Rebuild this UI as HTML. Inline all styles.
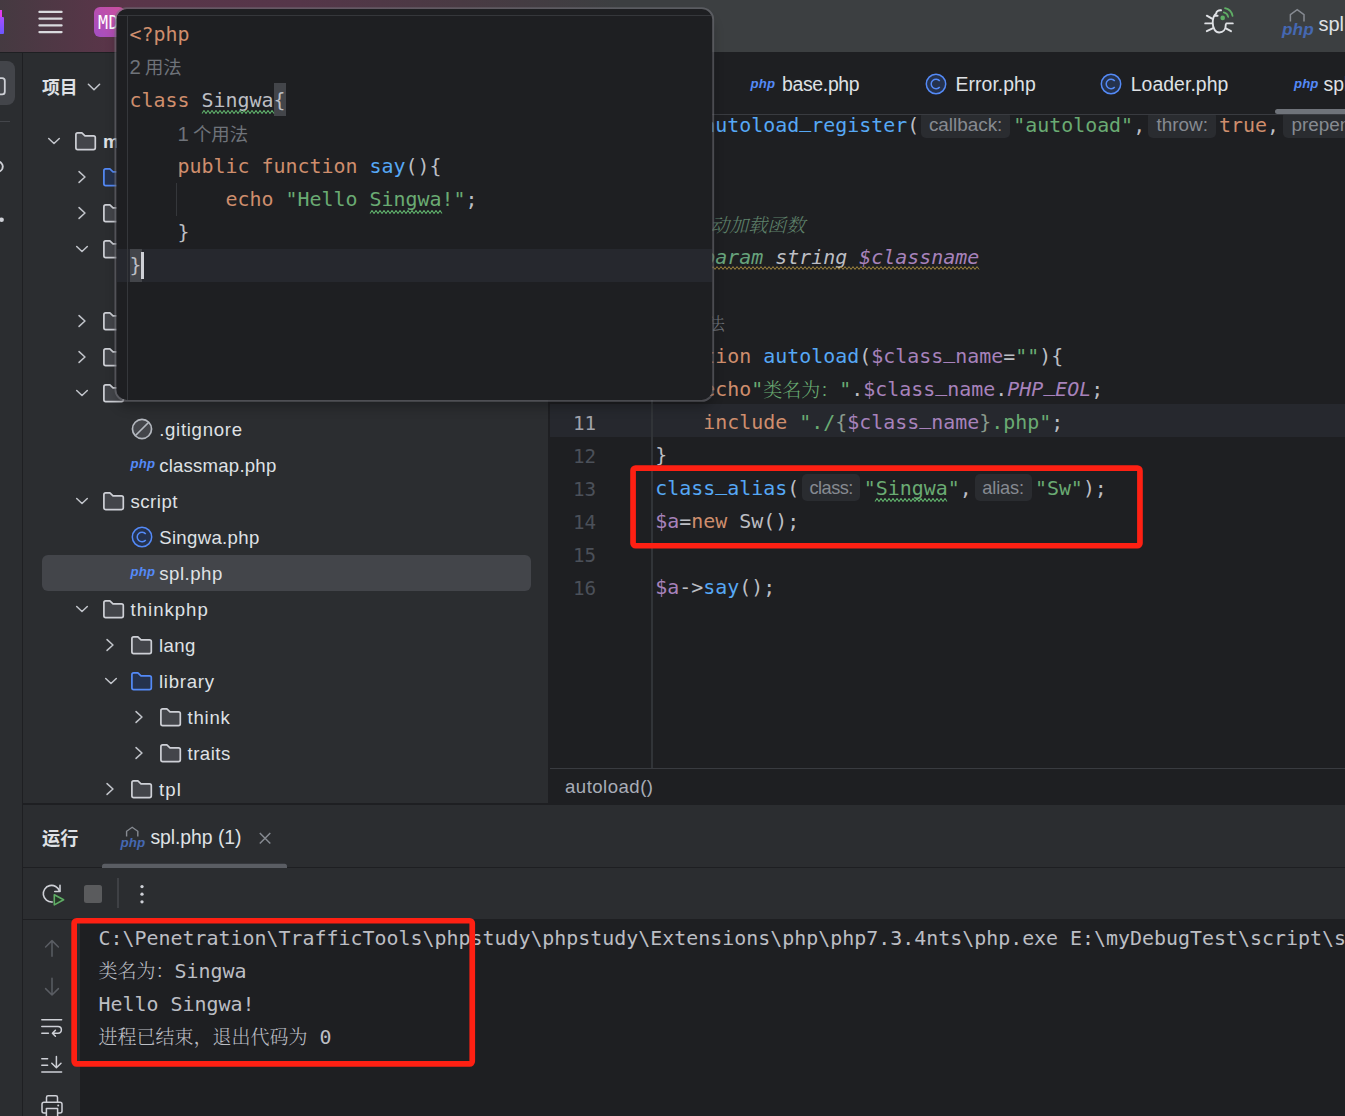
<!DOCTYPE html>
<html lang="zh"><head><meta charset="utf-8"><title>spl.php</title>
<style>
*{box-sizing:border-box;margin:0;padding:0}
html,body{width:1345px;height:1116px;overflow:hidden;background:#2b2d30}
body{position:relative;font-family:"Liberation Sans","Noto Sans CJK SC",sans-serif;color:#dfe1e5}
.a{position:absolute;display:block}
.t{white-space:pre;line-height:30px;height:30px}
.b{font-weight:bold}
.php{font-family:"Liberation Sans",sans-serif;font-style:italic;font-weight:bold;line-height:20px;height:20px;white-space:pre}
.code{font-family:"DejaVu Sans Mono","Liberation Mono","Noto Sans CJK SC",monospace;font-size:19.93px;line-height:33px;height:33px;white-space:pre;color:#bcbec4}
.cj{font-family:"Noto Serif CJK SC","Noto Sans CJK SC",serif;font-size:19px;line-height:0;font-weight:300;position:relative;top:0.8px}
.u{position:relative;top:-4.7px}.k{color:#cf8e6d}.s{color:#6aab73}.f{color:#56a8f5}.v{color:#a782bb}.i{font-style:italic}
.dc{color:#5f826b;font-style:italic}.dt{color:#67a37c;font-style:italic}
.h{display:inline-block;vertical-align:top;height:27px;margin-top:2.4px;border-radius:5px;background:#2a2c30;color:#868a91;font-family:"Liberation Sans",sans-serif;font-size:18.9px;line-height:28.2px;text-align:center;overflow:hidden}
.ln{font-family:"DejaVu Sans Mono","Liberation Mono",monospace;font-size:19.2px;line-height:33px;height:33px;color:#4b5059;text-align:right;width:60px}
.cv{font-size:18.4px;color:#6f737a;line-height:33px;height:33px;white-space:pre}
</style></head><body>

<div class="a" style="left:0;top:0;width:1345px;height:52px;background:linear-gradient(90deg,#453a41 0,#5a3549 110px,#553649 300px,#493a43 460px,#3c3f41 620px)"></div>
<div class="a" style="left:0;top:10px;width:2px;height:8px;background:#e13cf0"></div>
<div class="a" style="left:0;top:17px;width:4px;height:17px;background:linear-gradient(180deg,#a84dff,#6b57ff);border-radius:0 1px 1px 0"></div>
<svg class="a" style="left:36px;top:8px" width="30" height="28" viewBox="36 8 30 28"><path d="M39.4 11.9H61.6M39.4 18.6H61.6M39.4 25.4H61.6M39.4 32.1H61.6" stroke="#d9dade" stroke-width="2.2" stroke-linecap="round" fill="none"/></svg>
<div class="a" style="left:94px;top:7px;width:31px;height:30px;border-radius:6px;background:linear-gradient(45deg,#a24fc4,#cf4f9c)"></div>
<span class="a" style="left:97.5px;top:11px;font-family:'DejaVu Sans Mono',monospace;font-size:18.6px;line-height:24px;color:#fff;white-space:pre;letter-spacing:0.6px;transform:scaleX(.9);transform-origin:0 0">MD</span>
<svg class="a" style="left:1203px;top:4px" width="34" height="34" viewBox="1203 4 34 34">
<g fill="none" stroke="#dfe1e5" stroke-width="1.9" stroke-linecap="round">
<path d="M1225.8 24.5C1225.8 29.5 1223 32.5 1219.25 32.5C1215.5 32.5 1212.7 28.5 1212.7 22.5C1212.7 18.3 1214.2 15 1216.2 13.4C1216.4 11.3 1218.2 10 1221 10.3"/>
<path d="M1214.8 15.7H1217.6"/>
<path d="M1212 18.6L1206.8 15.7M1212 23.4H1205.2M1212.6 28.3L1206.8 31.2"/>
<path d="M1226.4 23.4H1232.8M1225.8 28.3L1231 31.2"/>
</g>
<circle cx="1222.7" cy="17.9" r="2.3" fill="#5fad65"/>
<g fill="none" stroke="#5fad65" stroke-width="1.7" stroke-linecap="round">
<path d="M1223.8 12.4A5.6 5.6 0 0 1 1228.2 16.8"/>
<path d="M1225 8.2A9.8 9.8 0 0 1 1232.6 16"/>
</g></svg>
<svg class="a" style="left:1286px;top:6px" width="24" height="18" viewBox="1286 6 24 18"><path d="M1290.4 21.5V14.6L1297.2 9.6L1304 14.6V21.5" fill="none" stroke="#868a91" stroke-width="1.5"/></svg>
<span class="a php" style="left:1282px;top:19.3px;font-size:17.2px;color:#4568b2;letter-spacing:0.1px">php</span>
<span id="tb_spl" class="a t " style="left:1318.5px;top:9.2px;font-size:20px;color:#dfe1e5;">spl.php</span>
<div class="a" style="left:0;top:52px;width:22px;height:1064px;background:#2b2d30"></div>
<div class="a" style="left:22px;top:52px;width:1px;height:1064px;background:#1e1f22"></div>
<div class="a" style="left:-10px;top:61px;width:24.5px;height:44px;border-radius:8px;background:#43454a"></div>
<svg class="a" style="left:0;top:70px" width="12" height="160" viewBox="0 70 12 160">
<rect x="-10" y="78.1" width="14.8" height="16.2" rx="2.6" fill="none" stroke="#ced0d6" stroke-width="1.8"/>
<circle cx="-2.2" cy="166.6" r="5" fill="none" stroke="#ced0d6" stroke-width="1.9"/>
<circle cx="1.6" cy="219.7" r="2.3" fill="#ced0d6"/></svg>
<div class="a" style="left:0;top:121px;width:10px;height:1px;background:#43454a"></div>
<div class="a" style="left:23px;top:52px;width:525px;height:751px;background:#2b2d30"></div>
<span id="proj" class="a t b" style="left:42px;top:73px;font-size:17.8px;color:#dfe1e5;letter-spacing:-0.04px">项目</span>
<svg class="a" style="left:86px;top:78.7px" width="16" height="16" viewBox="-8 -8 16 16"><path d="M-5.6 -2.7L0 2.7L5.6 -2.7" fill="none" stroke="#c3c6cc" stroke-width="1.55" stroke-linecap="round" stroke-linejoin="round"/></svg>
<div class="a" style="left:41.5px;top:554.5px;width:489px;height:36px;border-radius:6px;background:#43454a"></div>
<svg class="a" style="left:45.5px;top:132.8px" width="16" height="16" viewBox="-8 -8 16 16"><path d="M-5.3 -2.55L0 2.55L5.3 -2.55" fill="none" stroke="#c0c3c9" stroke-width="1.55" stroke-linecap="round" stroke-linejoin="round"/></svg>
<svg class="a" style="left:74.7px;top:131.7px" width="22" height="19" viewBox="0 0 22 19"><path d="M2.7 .9H6.9L10 3.8H18.5Q20.3 3.8 20.3 5.6V15.8Q20.3 17.6 18.5 17.6H2.7Q.9 17.6 .9 15.8V2.7Q.9 .9 2.7 .9Z" fill="#43454a" stroke="#ced0d6" stroke-width="1.7" stroke-linejoin="round"/></svg>
<span id="tr0" class="a t b" style="left:103.0px;top:126.9px;font-size:18.6px;color:#dfe1e5;">myDebugTest</span>
<svg class="a" style="left:73.95px;top:169.1px" width="16" height="16" viewBox="-8 -8 16 16"><path d="M-2.95 -5.4L2.95 0L-2.95 5.4" fill="none" stroke="#c0c3c9" stroke-width="1.55" stroke-linecap="round" stroke-linejoin="round"/></svg>
<svg class="a" style="left:103.1px;top:167.7px" width="22" height="19" viewBox="0 0 22 19"><path d="M2.7 .9H6.9L10 3.8H18.5Q20.3 3.8 20.3 5.6V15.8Q20.3 17.6 18.5 17.6H2.7Q.9 17.6 .9 15.8V2.7Q.9 .9 2.7 .9Z" fill="#25324d" stroke="#548af7" stroke-width="1.7" stroke-linejoin="round"/></svg>
<svg class="a" style="left:73.95px;top:205.1px" width="16" height="16" viewBox="-8 -8 16 16"><path d="M-2.95 -5.4L2.95 0L-2.95 5.4" fill="none" stroke="#c0c3c9" stroke-width="1.55" stroke-linecap="round" stroke-linejoin="round"/></svg>
<svg class="a" style="left:103.1px;top:203.7px" width="22" height="19" viewBox="0 0 22 19"><path d="M2.7 .9H6.9L10 3.8H18.5Q20.3 3.8 20.3 5.6V15.8Q20.3 17.6 18.5 17.6H2.7Q.9 17.6 .9 15.8V2.7Q.9 .9 2.7 .9Z" fill="#43454a" stroke="#ced0d6" stroke-width="1.7" stroke-linejoin="round"/></svg>
<svg class="a" style="left:74.0px;top:240.8px" width="16" height="16" viewBox="-8 -8 16 16"><path d="M-5.3 -2.55L0 2.55L5.3 -2.55" fill="none" stroke="#c0c3c9" stroke-width="1.55" stroke-linecap="round" stroke-linejoin="round"/></svg>
<svg class="a" style="left:103.1px;top:239.7px" width="22" height="19" viewBox="0 0 22 19"><path d="M2.7 .9H6.9L10 3.8H18.5Q20.3 3.8 20.3 5.6V15.8Q20.3 17.6 18.5 17.6H2.7Q.9 17.6 .9 15.8V2.7Q.9 .9 2.7 .9Z" fill="#43454a" stroke="#ced0d6" stroke-width="1.7" stroke-linejoin="round"/></svg>
<svg class="a" style="left:73.95px;top:313.1px" width="16" height="16" viewBox="-8 -8 16 16"><path d="M-2.95 -5.4L2.95 0L-2.95 5.4" fill="none" stroke="#c0c3c9" stroke-width="1.55" stroke-linecap="round" stroke-linejoin="round"/></svg>
<svg class="a" style="left:103.1px;top:311.7px" width="22" height="19" viewBox="0 0 22 19"><path d="M2.7 .9H6.9L10 3.8H18.5Q20.3 3.8 20.3 5.6V15.8Q20.3 17.6 18.5 17.6H2.7Q.9 17.6 .9 15.8V2.7Q.9 .9 2.7 .9Z" fill="#43454a" stroke="#ced0d6" stroke-width="1.7" stroke-linejoin="round"/></svg>
<svg class="a" style="left:73.95px;top:349.1px" width="16" height="16" viewBox="-8 -8 16 16"><path d="M-2.95 -5.4L2.95 0L-2.95 5.4" fill="none" stroke="#c0c3c9" stroke-width="1.55" stroke-linecap="round" stroke-linejoin="round"/></svg>
<svg class="a" style="left:103.1px;top:347.7px" width="22" height="19" viewBox="0 0 22 19"><path d="M2.7 .9H6.9L10 3.8H18.5Q20.3 3.8 20.3 5.6V15.8Q20.3 17.6 18.5 17.6H2.7Q.9 17.6 .9 15.8V2.7Q.9 .9 2.7 .9Z" fill="#43454a" stroke="#ced0d6" stroke-width="1.7" stroke-linejoin="round"/></svg>
<svg class="a" style="left:74.0px;top:384.8px" width="16" height="16" viewBox="-8 -8 16 16"><path d="M-5.3 -2.55L0 2.55L5.3 -2.55" fill="none" stroke="#c0c3c9" stroke-width="1.55" stroke-linecap="round" stroke-linejoin="round"/></svg>
<svg class="a" style="left:103.1px;top:383.7px" width="22" height="19" viewBox="0 0 22 19"><path d="M2.7 .9H6.9L10 3.8H18.5Q20.3 3.8 20.3 5.6V15.8Q20.3 17.6 18.5 17.6H2.7Q.9 17.6 .9 15.8V2.7Q.9 .9 2.7 .9Z" fill="#43454a" stroke="#ced0d6" stroke-width="1.7" stroke-linejoin="round"/></svg>
<svg class="a" style="left:130.9px;top:418.3px" width="22" height="22" viewBox="-11 -11 22 22"><circle r="9.55" fill="#43454a" stroke="#b4b8bf" stroke-width="1.7"/><path d="M-6.75286976033153 6.75286976033153L6.75286976033153 -6.75286976033153" stroke="#b4b8bf" stroke-width="1.7"/></svg>
<span id="tr8" class="a t " style="left:159.2px;top:414.9px;font-size:18.6px;color:#dfe1e5;letter-spacing:0.70px">.gitignore</span>
<span class="a php" style="left:130.6px;top:454.4px;font-size:13.2px;color:#548af7;letter-spacing:0.1px">php</span>
<span id="tr9" class="a t " style="left:159.2px;top:450.9px;font-size:18.6px;color:#dfe1e5;letter-spacing:0.21px">classmap.php</span>
<svg class="a" style="left:74.0px;top:492.8px" width="16" height="16" viewBox="-8 -8 16 16"><path d="M-5.3 -2.55L0 2.55L5.3 -2.55" fill="none" stroke="#c0c3c9" stroke-width="1.55" stroke-linecap="round" stroke-linejoin="round"/></svg>
<svg class="a" style="left:103.1px;top:491.7px" width="22" height="19" viewBox="0 0 22 19"><path d="M2.7 .9H6.9L10 3.8H18.5Q20.3 3.8 20.3 5.6V15.8Q20.3 17.6 18.5 17.6H2.7Q.9 17.6 .9 15.8V2.7Q.9 .9 2.7 .9Z" fill="#43454a" stroke="#ced0d6" stroke-width="1.7" stroke-linejoin="round"/></svg>
<span id="tr10" class="a t " style="left:130.5px;top:486.9px;font-size:18.6px;color:#dfe1e5;letter-spacing:0.51px">script</span>
<svg class="a" style="left:130.9px;top:526.2px" width="22" height="22" viewBox="-11 -11 22 22"><circle r="9.7" fill="#25324d" stroke="#548af7" stroke-width="1.5"/><path d="M3.75 -3A4.8 4.8 0 1 0 3.75 3" fill="none" stroke="#548af7" stroke-width="1.5"/></svg>
<span id="tr11" class="a t " style="left:159.2px;top:522.9px;font-size:18.6px;color:#dfe1e5;letter-spacing:0.32px">Singwa.php</span>
<span class="a php" style="left:130.6px;top:562.4px;font-size:13.2px;color:#548af7;letter-spacing:0.1px">php</span>
<span id="tr12" class="a t " style="left:159.2px;top:558.9px;font-size:18.6px;color:#dfe1e5;letter-spacing:0.53px">spl.php</span>
<svg class="a" style="left:74.0px;top:600.8px" width="16" height="16" viewBox="-8 -8 16 16"><path d="M-5.3 -2.55L0 2.55L5.3 -2.55" fill="none" stroke="#c0c3c9" stroke-width="1.55" stroke-linecap="round" stroke-linejoin="round"/></svg>
<svg class="a" style="left:103.1px;top:599.7px" width="22" height="19" viewBox="0 0 22 19"><path d="M2.7 .9H6.9L10 3.8H18.5Q20.3 3.8 20.3 5.6V15.8Q20.3 17.6 18.5 17.6H2.7Q.9 17.6 .9 15.8V2.7Q.9 .9 2.7 .9Z" fill="#43454a" stroke="#ced0d6" stroke-width="1.7" stroke-linejoin="round"/></svg>
<span id="tr13" class="a t " style="left:130.5px;top:594.9px;font-size:18.6px;color:#dfe1e5;letter-spacing:1.00px">thinkphp</span>
<svg class="a" style="left:102.45px;top:637.1px" width="16" height="16" viewBox="-8 -8 16 16"><path d="M-2.95 -5.4L2.95 0L-2.95 5.4" fill="none" stroke="#c0c3c9" stroke-width="1.55" stroke-linecap="round" stroke-linejoin="round"/></svg>
<svg class="a" style="left:131.4px;top:635.7px" width="22" height="19" viewBox="0 0 22 19"><path d="M2.7 .9H6.9L10 3.8H18.5Q20.3 3.8 20.3 5.6V15.8Q20.3 17.6 18.5 17.6H2.7Q.9 17.6 .9 15.8V2.7Q.9 .9 2.7 .9Z" fill="#43454a" stroke="#ced0d6" stroke-width="1.7" stroke-linejoin="round"/></svg>
<span id="tr14" class="a t " style="left:159.0px;top:630.9px;font-size:18.6px;color:#dfe1e5;letter-spacing:0.36px">lang</span>
<svg class="a" style="left:102.5px;top:672.8px" width="16" height="16" viewBox="-8 -8 16 16"><path d="M-5.3 -2.55L0 2.55L5.3 -2.55" fill="none" stroke="#c0c3c9" stroke-width="1.55" stroke-linecap="round" stroke-linejoin="round"/></svg>
<svg class="a" style="left:131.4px;top:671.7px" width="22" height="19" viewBox="0 0 22 19"><path d="M2.7 .9H6.9L10 3.8H18.5Q20.3 3.8 20.3 5.6V15.8Q20.3 17.6 18.5 17.6H2.7Q.9 17.6 .9 15.8V2.7Q.9 .9 2.7 .9Z" fill="#25324d" stroke="#548af7" stroke-width="1.7" stroke-linejoin="round"/></svg>
<span id="tr15" class="a t " style="left:159.0px;top:666.9px;font-size:18.6px;color:#dfe1e5;letter-spacing:0.74px">library</span>
<svg class="a" style="left:130.95px;top:709.1px" width="16" height="16" viewBox="-8 -8 16 16"><path d="M-2.95 -5.4L2.95 0L-2.95 5.4" fill="none" stroke="#c0c3c9" stroke-width="1.55" stroke-linecap="round" stroke-linejoin="round"/></svg>
<svg class="a" style="left:159.8px;top:707.7px" width="22" height="19" viewBox="0 0 22 19"><path d="M2.7 .9H6.9L10 3.8H18.5Q20.3 3.8 20.3 5.6V15.8Q20.3 17.6 18.5 17.6H2.7Q.9 17.6 .9 15.8V2.7Q.9 .9 2.7 .9Z" fill="#43454a" stroke="#ced0d6" stroke-width="1.7" stroke-linejoin="round"/></svg>
<span id="tr16" class="a t " style="left:187.5px;top:702.9px;font-size:18.6px;color:#dfe1e5;letter-spacing:0.78px">think</span>
<svg class="a" style="left:130.95px;top:745.1px" width="16" height="16" viewBox="-8 -8 16 16"><path d="M-2.95 -5.4L2.95 0L-2.95 5.4" fill="none" stroke="#c0c3c9" stroke-width="1.55" stroke-linecap="round" stroke-linejoin="round"/></svg>
<svg class="a" style="left:159.8px;top:743.7px" width="22" height="19" viewBox="0 0 22 19"><path d="M2.7 .9H6.9L10 3.8H18.5Q20.3 3.8 20.3 5.6V15.8Q20.3 17.6 18.5 17.6H2.7Q.9 17.6 .9 15.8V2.7Q.9 .9 2.7 .9Z" fill="#43454a" stroke="#ced0d6" stroke-width="1.7" stroke-linejoin="round"/></svg>
<span id="tr17" class="a t " style="left:187.5px;top:738.9px;font-size:18.6px;color:#dfe1e5;letter-spacing:0.48px">traits</span>
<svg class="a" style="left:102.45px;top:781.1px" width="16" height="16" viewBox="-8 -8 16 16"><path d="M-2.95 -5.4L2.95 0L-2.95 5.4" fill="none" stroke="#c0c3c9" stroke-width="1.55" stroke-linecap="round" stroke-linejoin="round"/></svg>
<svg class="a" style="left:131.4px;top:779.7px" width="22" height="19" viewBox="0 0 22 19"><path d="M2.7 .9H6.9L10 3.8H18.5Q20.3 3.8 20.3 5.6V15.8Q20.3 17.6 18.5 17.6H2.7Q.9 17.6 .9 15.8V2.7Q.9 .9 2.7 .9Z" fill="#43454a" stroke="#ced0d6" stroke-width="1.7" stroke-linejoin="round"/></svg>
<span id="tr18" class="a t " style="left:159.0px;top:774.9px;font-size:18.6px;color:#dfe1e5;letter-spacing:1.12px">tpl</span>
<div class="a" style="left:0;top:52px;width:549px;height:1px;background:#1e1f22"></div>
<div class="a" style="left:548px;top:52px;width:797px;height:752px;background:#1e1f22"></div>
<div class="a" style="left:549px;top:404px;width:796px;height:33px;background:#26282e"></div>
<div class="a code" style="left:655.3px;top:108.80000000000001px"><span class="f">spl<span class="u">_</span>autoload<span class="u">_</span>register</span>(<span class="h" style="width:88.5px;margin-left:2.2px;margin-right:3.3px;font-size:18.9px;letter-spacing:0px">callback:</span><span class="s">"autoload"</span>,<span class="h" style="width:67.5px;margin-left:3.3px;margin-right:3.2px;font-size:18.9px;letter-spacing:0px">throw:</span><span class="k">true</span>,<span class="h" style="width:91px;margin-left:4.2px;margin-right:3.3px;font-size:18.9px;letter-spacing:0px">prepend:</span></div>
<div class="a code" style="left:655.3px;top:174.8px"><span class="dc">/**</span></div>
<div class="a code" style="left:655.3px;top:207.8px"><span class="dc"> * <span class="cj">自动加载函数</span></span></div>
<div class="a code" style="left:655.3px;top:240.8px"><span class="dc"> * </span><span class="dt">@param</span><span class="i"> string </span><span class="v i">$classname</span></div>
<div class="a code" style="left:655.3px;top:273.8px"><span class="dc"> */</span></div>
<div class="a code" style="left:655.3px;top:339.8px"><span class="k">function</span> <span class="f">autoload</span>(<span class="v">$class<span class="u">_</span>name</span>=<span class="s">""</span>){</div>
<div class="a code" style="left:655.3px;top:372.8px">    <span class="k">echo</span><span class="s">"<span class="cj">类名为：</span>"</span>.<span class="v">$class<span class="u">_</span>name</span>.<span class="v i">PHP<span class="u">_</span>EOL</span>;</div>
<div class="a code" style="left:655.3px;top:405.8px">    <span class="k">include</span> <span class="s">"./</span><span style="color:#8a9a8c">{</span><span class="v">$class<span class="u">_</span>name</span><span style="color:#8a9a8c">}</span><span class="s">.php"</span>;</div>
<div class="a code" style="left:655.3px;top:438.8px">}</div>
<div class="a code" style="left:655.3px;top:471.8px"><span class="f">class<span class="u">_</span>alias</span>(<span class="h" style="width:58px;margin-left:2.9px;margin-right:3.6px;font-size:18.2px;letter-spacing:-0.5px">class:</span><span class="s">"Singwa"</span>,<span class="h" style="width:57px;margin-left:2.9px;margin-right:3.3px;font-size:18.2px;letter-spacing:-0.12px">alias:</span><span class="s">"Sw"</span>);</div>
<div class="a code" style="left:655.3px;top:504.8px"><span class="v">$a</span>=<span class="k">new</span> Sw();</div>
<div class="a code" style="left:655.3px;top:570.8px"><span class="v">$a</span>-&gt;<span class="f">say</span>();</div>
<span id="cv_e" class="a cv" style="left:655.3px;top:305.6px">1 <span style="font-family:'Noto Serif CJK SC',serif;font-size:17.4px;font-weight:300;letter-spacing:1px">个用法</span></span>
<svg class="a" style="left:702px;top:266.3px" width="279.0" height="4" viewBox="0 0 279.0 4"><path d="M1.0 3.4L3.0 0.6L5.0 3.4L7.0 0.6L9.0 3.4L11.0 0.6L13.0 3.4L15.0 0.6L17.0 3.4L19.0 0.6L21.0 3.4L23.0 0.6L25.0 3.4L27.0 0.6L29.0 3.4L31.0 0.6L33.0 3.4L35.0 0.6L37.0 3.4L39.0 0.6L41.0 3.4L43.0 0.6L45.0 3.4L47.0 0.6L49.0 3.4L51.0 0.6L53.0 3.4L55.0 0.6L57.0 3.4L59.0 0.6L61.0 3.4L63.0 0.6L65.0 3.4L67.0 0.6L69.0 3.4L71.0 0.6L73.0 3.4L75.0 0.6L77.0 3.4L79.0 0.6L81.0 3.4L83.0 0.6L85.0 3.4L87.0 0.6L89.0 3.4L91.0 0.6L93.0 3.4L95.0 0.6L97.0 3.4L99.0 0.6L101.0 3.4L103.0 0.6L105.0 3.4L107.0 0.6L109.0 3.4L111.0 0.6L113.0 3.4L115.0 0.6L117.0 3.4L119.0 0.6L121.0 3.4L123.0 0.6L125.0 3.4L127.0 0.6L129.0 3.4L131.0 0.6L133.0 3.4L135.0 0.6L137.0 3.4L139.0 0.6L141.0 3.4L143.0 0.6L145.0 3.4L147.0 0.6L149.0 3.4L151.0 0.6L153.0 3.4L155.0 0.6L157.0 3.4L159.0 0.6L161.0 3.4L163.0 0.6L165.0 3.4L167.0 0.6L169.0 3.4L171.0 0.6L173.0 3.4L175.0 0.6L177.0 3.4L179.0 0.6L181.0 3.4L183.0 0.6L185.0 3.4L187.0 0.6L189.0 3.4L191.0 0.6L193.0 3.4L195.0 0.6L197.0 3.4L199.0 0.6L201.0 3.4L203.0 0.6L205.0 3.4L207.0 0.6L209.0 3.4L211.0 0.6L213.0 3.4L215.0 0.6L217.0 3.4L219.0 0.6L221.0 3.4L223.0 0.6L225.0 3.4L227.0 0.6L229.0 3.4L231.0 0.6L233.0 3.4L235.0 0.6L237.0 3.4L239.0 0.6L241.0 3.4L243.0 0.6L245.0 3.4L247.0 0.6L249.0 3.4L251.0 0.6L253.0 3.4L255.0 0.6L257.0 3.4L259.0 0.6L261.0 3.4L263.0 0.6L265.0 3.4L267.0 0.6L269.0 3.4L271.0 0.6L273.0 3.4L275.0 0.6L277.0 3.4" fill="none" stroke="#a3873f" stroke-width="1.0"/></svg>
<svg class="a" style="left:874px;top:497.5px" width="74.0" height="4" viewBox="0 0 74.0 4"><path d="M1.0 3.5L3.0 0.5L5.0 3.5L7.0 0.5L9.0 3.5L11.0 0.5L13.0 3.5L15.0 0.5L17.0 3.5L19.0 0.5L21.0 3.5L23.0 0.5L25.0 3.5L27.0 0.5L29.0 3.5L31.0 0.5L33.0 3.5L35.0 0.5L37.0 3.5L39.0 0.5L41.0 3.5L43.0 0.5L45.0 3.5L47.0 0.5L49.0 3.5L51.0 0.5L53.0 3.5L55.0 0.5L57.0 3.5L59.0 0.5L61.0 3.5L63.0 0.5L65.0 3.5L67.0 0.5L69.0 3.5L71.0 0.5L73.0 3.5" fill="none" stroke="#5fb06b" stroke-width="1.05"/></svg>
<div class="a" style="left:651.4px;top:115px;width:1.7px;height:653px;background:#313438"></div>
<div class="a ln" style="left:536px;top:406.90000000000003px;color:#a1a3ab">11</div>
<div class="a ln" style="left:536px;top:439.90000000000003px;color:#4b5059">12</div>
<div class="a ln" style="left:536px;top:472.90000000000003px;color:#4b5059">13</div>
<div class="a ln" style="left:536px;top:505.90000000000003px;color:#4b5059">14</div>
<div class="a ln" style="left:536px;top:538.9px;color:#4b5059">15</div>
<div class="a ln" style="left:536px;top:571.9px;color:#4b5059">16</div>
<div class="a" style="left:548px;top:52px;width:797px;height:62px;background:#1e1f22"></div>
<div class="a" style="left:548px;top:114px;width:797px;height:1.4px;background:#393b40"></div>
<span class="a php" style="left:750.6px;top:73.6px;font-size:13.2px;color:#548af7;letter-spacing:0.1px">php</span>
<span id="tab1" class="a t " style="left:782px;top:69px;font-size:19.4px;color:#dfe1e5;letter-spacing:-0.31px">base.php</span>
<svg class="a" style="left:925px;top:73.3px" width="22" height="22" viewBox="-11 -11 22 22"><circle r="9.7" fill="#25324d" stroke="#548af7" stroke-width="1.5"/><path d="M3.75 -3A4.8 4.8 0 1 0 3.75 3" fill="none" stroke="#548af7" stroke-width="1.5"/></svg>
<span id="tab2" class="a t " style="left:955.6px;top:69px;font-size:19.4px;color:#dfe1e5;letter-spacing:0.04px">Error.php</span>
<svg class="a" style="left:1100px;top:73.3px" width="22" height="22" viewBox="-11 -11 22 22"><circle r="9.7" fill="#25324d" stroke="#548af7" stroke-width="1.5"/><path d="M3.75 -3A4.8 4.8 0 1 0 3.75 3" fill="none" stroke="#548af7" stroke-width="1.5"/></svg>
<span id="tab3" class="a t " style="left:1130.7px;top:69px;font-size:19.4px;color:#dfe1e5;letter-spacing:0.07px">Loader.php</span>
<span class="a php" style="left:1294px;top:73.6px;font-size:13.2px;color:#548af7;letter-spacing:0.1px">php</span>
<span id="tab4" class="a t " style="left:1323.5px;top:69px;font-size:19.4px;color:#dfe1e5;">spl.php</span>
<div class="a" style="left:1274.5px;top:109.3px;width:90px;height:5px;border-radius:2.5px;background:#6f737a"></div>
<div class="a" style="left:549px;top:768px;width:796px;height:1px;background:#393b40"></div>
<span id="bc" class="a t " style="left:565px;top:771.6px;font-size:18.6px;color:#a8adb8;letter-spacing:0.48px">autoload()</span>
<div class="a" style="left:548px;top:52px;width:1.5px;height:751px;background:#1e1f22"></div>
<div class="a" style="left:23px;top:803px;width:1322px;height:2px;background:#1e1f22"></div>
<div class="a" style="left:23px;top:805px;width:1322px;height:114px;background:#2b2d30"></div>
<span id="run" class="a t b" style="left:42px;top:823.6px;font-size:18.2px;color:#dfe1e5;letter-spacing:0.00px">运行</span>
<svg class="a" style="left:124px;top:824px" width="20" height="14" viewBox="124 824 20 14"><path d="M126.6 836.5V831.3L132.2 827.3L137.8 831.3V836.5" fill="none" stroke="#868a91" stroke-width="1.4"/></svg>
<span class="a php" style="left:120.4px;top:832.7px;font-size:13.4px;color:#4568b2;letter-spacing:0.1px">php</span>
<span id="runtab" class="a t " style="left:150.4px;top:822.2px;font-size:19.4px;color:#dfe1e5;letter-spacing:-0.05px">spl.php (1)</span>
<svg class="a" style="left:257px;top:830px" width="16" height="16" viewBox="257 830 16 16"><path d="M259.8 833L270.3 843.5M270.3 833L259.8 843.5" stroke="#868a91" stroke-width="1.5" fill="none"/></svg>
<div class="a" style="left:23px;top:867.3px;width:1322px;height:1px;background:#1e1f22"></div>
<svg class="a" style="left:100px;top:862px" width="190" height="8" viewBox="100 862 190 8"><path d="M102 868V866.3Q102 863.8 104.5 863.8H284.5Q287 863.8 287 866.3V868Z" fill="#5a5d63"/></svg>
<svg class="a" style="left:38px;top:878px" width="30" height="32" viewBox="38 878 30 32">
<path d="M52.2 902A8.3 8.3 0 1 1 59.5 891.2" fill="none" stroke="#ced0d6" stroke-width="1.6" stroke-linecap="round"/>
<path d="M54.8 891.5H60V885.2" fill="none" stroke="#ced0d6" stroke-width="1.6" stroke-linecap="round" stroke-linejoin="round"/>
<path d="M54.3 894.7L63.6 899.8L54.3 904.9Z" fill="#253627" stroke="#5fad65" stroke-width="1.6" stroke-linejoin="round"/></svg>
<div class="a" style="left:84px;top:885px;width:18px;height:18px;border-radius:2.5px;background:#5a5b5d"></div>
<div class="a" style="left:117px;top:878px;width:2px;height:29.5px;background:#3f4145"></div>
<svg class="a" style="left:138px;top:882px" width="8" height="24" viewBox="138 882 8 24" fill="#ced0d6"><circle cx="142" cy="886.6" r="1.65"/><circle cx="142" cy="894.2" r="1.65"/><circle cx="142" cy="901.8" r="1.65"/></svg>
<div class="a" style="left:23px;top:918.6px;width:1322px;height:1px;background:#1e1f22"></div>
<div class="a" style="left:80px;top:919.6px;width:1265px;height:197px;background:#1e1f22"></div>
<div class="a" style="left:23px;top:919.6px;width:57px;height:197px;background:#2b2d30"></div>
<svg class="a" style="left:38px;top:935px" width="30" height="181" viewBox="38 935 30 181" fill="none" stroke-linecap="round" stroke-linejoin="round">
<g stroke="#5a5d63" stroke-width="1.5">
<path d="M52 956.3V940.6M45.6 947L52 940.6L58.4 947"/>
<path d="M52 978.3V995M45.6 988.6L52 995L58.4 988.6"/>
</g>
<g stroke="#ced0d6" stroke-width="1.5">
<path d="M41.8 1019.7H61.6"/>
<path d="M41.8 1033.2H48.4"/>
<path d="M41.8 1026.4H58A3.4 3.4 0 0 1 58 1033.2H52.6M55.4 1030.2L52.4 1033.2L55.4 1036.2"/>
<path d="M41.8 1058.7H47.6M41.8 1065.2H47.6M41.8 1072H61.6"/>
<path d="M56.4 1056.5V1067.6M51.8 1063.2L56.4 1067.8L61 1063.2"/>
<path d="M46.5 1102V1097.4Q46.5 1095.8 48.1 1095.8H55.9Q57.5 1095.8 57.5 1097.4V1102"/>
<path d="M46.3 1113H44Q42 1113 42 1111V1104.2Q42 1102.2 44 1102.2H60Q62 1102.2 62 1104.2V1111Q62 1113 60 1113H57.7"/>
<path d="M46.4 1108.5H57.6V1118H46.4Z"/>
</g><circle cx="58.2" cy="1105.6" r="1" fill="#ced0d6"/></svg>
<div class="a code" style="left:98.6px;top:921.6px">C:\Penetration\TrafficTools\phpstudy\phpstudy\Extensions\php\php7.3.4nts\php.exe E:\myDebugTest\script\spl.php</div>
<div class="a code" style="left:98.6px;top:954.6px"><span class="cj">类名为：</span>Singwa</div>
<div class="a code" style="left:98.6px;top:987.6px">Hello Singwa!</div>
<div class="a code" style="left:98.6px;top:1020.6px"><span class="cj">进程已结束，退出代码为</span> 0</div>
<div class="a" style="left:117px;top:12px;width:595px;height:388px;border-radius:12px;box-shadow:0 7px 12px 0 rgba(0,0,0,.28)"></div>
<svg class="a" style="left:112px;top:4px" width="606" height="402" viewBox="112 4 606 402">
<rect x="116.3" y="9" width="596" height="391" rx="10.6" fill="#1e1f22"/>
<rect x="115.4" y="8.1" width="597.8" height="392.8" rx="11.5" fill="none" stroke="rgba(116,117,123,.55)" stroke-width="1.9"/></svg>
<div class="a" style="left:116.6px;top:249px;width:595.8px;height:33px;background:#26282e"></div>
<div class="a" style="left:117px;top:15px;width:594px;height:1px;background:#35373b"></div>
<div class="a" style="left:126.8px;top:15px;width:1px;height:385px;background:#35373b"></div>
<div class="a" style="left:274px;top:83px;width:12px;height:33px;background:#43454a"></div>
<div class="a" style="left:130px;top:249px;width:12px;height:33px;background:#43454a"></div>
<div class="a" style="left:175.6px;top:183px;width:1px;height:33px;background:#35373b"></div>
<div class="a code" style="left:129.6px;top:17.6px"><span class="k">&lt;?php</span></div>
<div class="a code" style="left:129.6px;top:83.6px"><span class="k">class</span> Singwa{</div>
<div class="a code" style="left:129.6px;top:149.6px">    <span class="k">public function</span> <span class="f">say</span>(){</div>
<div class="a code" style="left:129.6px;top:182.6px">        <span class="k">echo</span> <span class="s">"Hello Singwa!"</span>;</div>
<div class="a code" style="left:129.6px;top:215.6px">    }</div>
<div class="a code" style="left:129.6px;top:248.6px">}</div>
<span id="cv1" class="a cv" style="left:129.6px;top:51.4px"><span style="font-size:20.4px;letter-spacing:-1.1px">2</span> 用法</span>
<span id="cv2" class="a cv" style="left:177.6px;top:117.69999999999999px"><span style="font-size:20.4px;letter-spacing:-1.1px">1</span> 个用法</span>
<svg class="a" style="left:201px;top:110.1px" width="74.0" height="4" viewBox="0 0 74.0 4"><path d="M1.0 3.5L3.0 0.5L5.0 3.5L7.0 0.5L9.0 3.5L11.0 0.5L13.0 3.5L15.0 0.5L17.0 3.5L19.0 0.5L21.0 3.5L23.0 0.5L25.0 3.5L27.0 0.5L29.0 3.5L31.0 0.5L33.0 3.5L35.0 0.5L37.0 3.5L39.0 0.5L41.0 3.5L43.0 0.5L45.0 3.5L47.0 0.5L49.0 3.5L51.0 0.5L53.0 3.5L55.0 0.5L57.0 3.5L59.0 0.5L61.0 3.5L63.0 0.5L65.0 3.5L67.0 0.5L69.0 3.5L71.0 0.5L73.0 3.5" fill="none" stroke="#5fb06b" stroke-width="1.05"/></svg>
<svg class="a" style="left:369px;top:209.8px" width="74.5" height="4" viewBox="0 0 74.5 4"><path d="M1.0 3.5L3.0 0.5L5.0 3.5L7.0 0.5L9.0 3.5L11.0 0.5L13.0 3.5L15.0 0.5L17.0 3.5L19.0 0.5L21.0 3.5L23.0 0.5L25.0 3.5L27.0 0.5L29.0 3.5L31.0 0.5L33.0 3.5L35.0 0.5L37.0 3.5L39.0 0.5L41.0 3.5L43.0 0.5L45.0 3.5L47.0 0.5L49.0 3.5L51.0 0.5L53.0 3.5L55.0 0.5L57.0 3.5L59.0 0.5L61.0 3.5L63.0 0.5L65.0 3.5L67.0 0.5L69.0 3.5L71.0 0.5L73.0 3.5" fill="none" stroke="#5fb06b" stroke-width="1.05"/></svg>
<div class="a" style="left:141.2px;top:252px;width:2.4px;height:27px;background:#ced0d6"></div>
<svg class="a" style="left:0;top:0" width="1345" height="1116" viewBox="0 0 1345 1116" fill="none" stroke="#fe2013" stroke-width="5.7">
<rect x="633.05" y="468.15" width="506.9" height="77.6" rx="2.5"/>
<rect x="74.15" y="920.75" width="398.1" height="143.1" rx="2.5"/>
</svg>
</body></html>
